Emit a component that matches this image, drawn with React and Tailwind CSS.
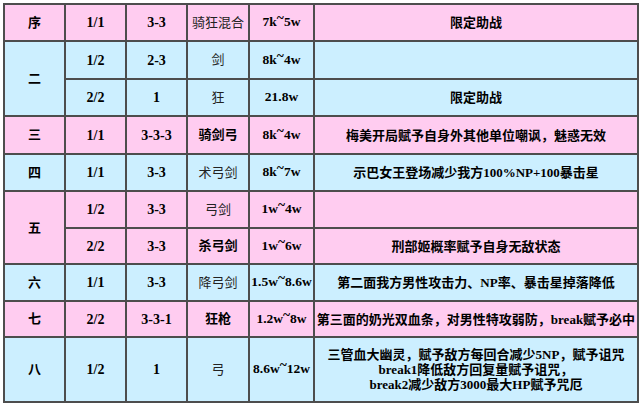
import React from 'react'

const PINK = 'bg-[#ffccf0]'
const BLUE = 'bg-[#ccefff]'

// ~ sits high in the original font
function Range({ from, to }) {
  return (
    <span>
      {from}
      <span className="relative -top-[4px]">~</span>
      {to}
    </span>
  )
}

const rows = [
  { bg: PINK, h: 'h-[37px]', no: '序', part: '1/1', wave: '3-3', cls: '骑狂混合', hp: <Range from="7k" to="5w" />, note: '限定助战' },
  { bg: BLUE, h: 'h-[38px]', no: '二', span: 2, part: '1/2', wave: '2-3', cls: '剑', hp: <Range from="8k" to="4w" />, note: '' },
  { bg: BLUE, h: 'h-[37px]', part: '2/2', wave: '1', cls: '狂', hp: '21.8w', note: '限定助战' },
  { bg: PINK, h: 'h-[38px]', no: '三', part: '1/1', wave: '3-3-3', cls: '骑剑弓', bold: true, hp: <Range from="8k" to="4w" />, note: '梅美开局赋予自身外其他单位嘲讽，魅惑无效' },
  { bg: BLUE, h: 'h-[37px]', no: '四', part: '1/1', wave: '3-3', cls: '术弓剑', hp: <Range from="8k" to="7w" />, note: '示巴女王登场减少我方100%NP+100暴击星' },
  { bg: PINK, h: 'h-[37px]', no: '五', span: 2, part: '1/2', wave: '3-3', cls: '弓剑', hp: <Range from="1w" to="4w" />, note: '' },
  { bg: PINK, h: 'h-[36px]', part: '2/2', wave: '3-3', cls: '杀弓剑', bold: true, hp: <Range from="1w" to="6w" />, note: '刑部姬概率赋予自身无敌状态' },
  { bg: BLUE, h: 'h-[37px]', no: '六', part: '1/1', wave: '3-3', cls: '降弓剑', hp: <Range from="1.5w" to="8.6w" />, note: '第二面我方男性攻击力、NP率、暴击星掉落降低' },
  { bg: PINK, h: 'h-[36px]', no: '七', part: '2/2', wave: '3-3-1', cls: '狂枪', bold: true, hp: <Range from="1.2w" to="8w" />, note: '第三面的奶光双血条，对男性特攻弱防，break赋予必中' },
  {
    bg: BLUE, h: 'h-[65px]', no: '八', part: '1/2', wave: '1', cls: '弓', hp: <Range from="8.6w" to="12w" />,
    note: (
      <>
        三管血大幽灵，赋予敌方每回合减少5NP，赋予诅咒<br />
        break1降低敌方回复量赋予诅咒，<br />
        break2减少敌方3000最大HP赋予咒厄
      </>
    ),
  },
]

const cell = 'border-2 border-[#4d4d4d] text-center align-middle p-0'

export default function App() {
  return (
    <div className="w-[640px] h-[405px] bg-white pt-[3px] pl-[3px] font-['Liberation_Serif','Noto_Sans_CJK_SC',serif] text-[13px] text-black">
      <table className="table-fixed border-collapse w-[634px] border-2 border-[#2b2b2b]">
        <colgroup>
          <col className="w-[61px]" />
          <col className="w-[61px]" />
          <col className="w-[61px]" />
          <col className="w-[62px]" />
          <col className="w-[65px]" />
          <col className="w-[324px]" />
        </colgroup>
        <tbody>
          {rows.map((r, i) => (
            <tr key={i} className={r.bg}>
              {r.no && (
                <td rowSpan={r.span || 1} className={`${cell} font-bold`}>
                  {r.no}
                </td>
              )}
              <td className={`${cell} ${r.h} font-bold text-[14px]`}>{r.part}</td>
              <td className={`${cell} font-bold text-[14px]`}>{r.wave}</td>
              <td className={`${cell} ${r.bold ? 'font-bold' : 'font-normal text-[#222]'}`}>{r.cls}</td>
              <td className={`${cell} font-bold text-[13.5px] whitespace-nowrap`}>{r.hp}</td>
              <td className={`${cell} font-bold leading-[15px] whitespace-nowrap`}>{r.note}</td>
            </tr>
          ))}
        </tbody>
      </table>
    </div>
  )
}
